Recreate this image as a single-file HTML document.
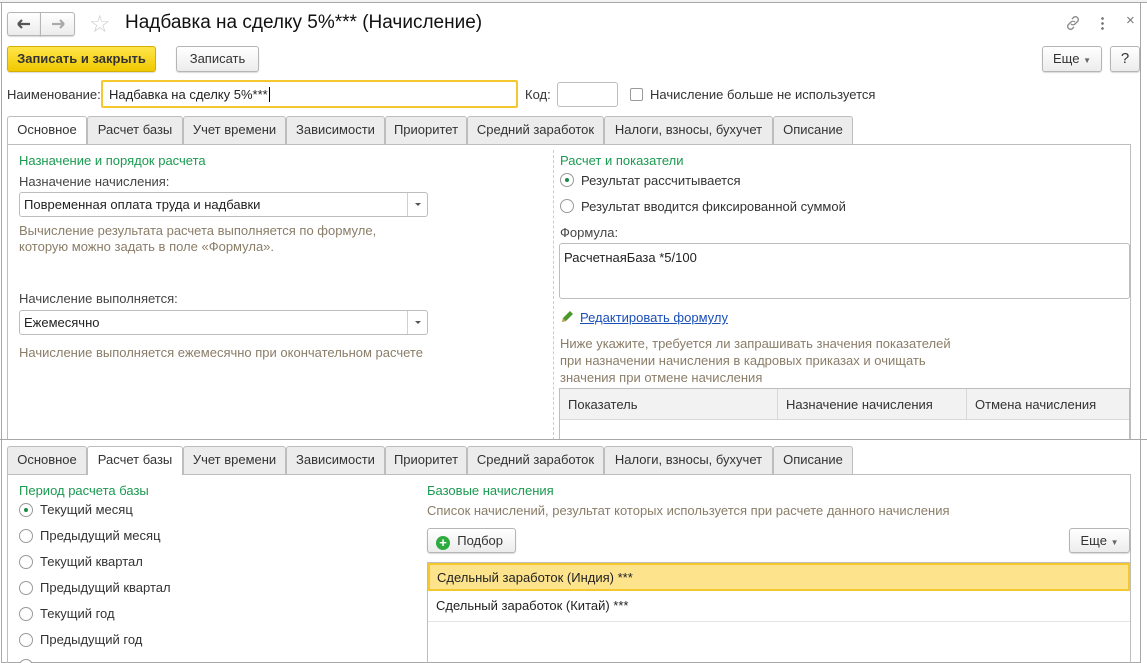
<!DOCTYPE html><html><head><meta charset="utf-8"><style>
*{box-sizing:border-box}
html,body{margin:0;width:1147px;height:663px;overflow:hidden}
body{background:#fff;font-family:"Liberation Sans",Arial,sans-serif;font-size:13px;color:#333;position:relative}
.a{position:absolute;white-space:nowrap}
.btn{position:absolute;border:1px solid #b5b5b5;border-radius:3px;background:linear-gradient(#fff,#ececec);box-shadow:0 1px 1px rgba(0,0,0,.15);text-align:center;color:#333}
.tab{position:absolute;height:28px;border:1px solid #bdbdbd;border-bottom:none;background:#ececec;border-radius:3px 3px 0 0;text-align:center;line-height:26px;color:#333}
.tab.on{background:#fff;height:29px}
.grn{color:#1a9a50}
.hint{color:#8a7d68}
.inp{position:absolute;border:1px solid #bdbdbd;border-radius:3px;background:#fff}
.rad{position:absolute;width:14px;height:14px;border:1px solid #9a9a9a;border-radius:50%;background:#fff}
.rad.on::after{content:"";position:absolute;left:4px;top:4px;width:4px;height:4px;border-radius:50%;background:#1a8a4a}
.dd{position:absolute;right:0;top:0;bottom:0;width:20px;border-left:1px solid #d0d0d0}
.dd::after{content:"";position:absolute;left:7px;top:10px;border:3px solid transparent;border-top:3px solid #555}
</style></head><body>
<div class="a" style="left:0;top:0;width:1147px;height:663px;overflow:hidden">
<div class="a" style="left:0;top:0;width:1147px;height:3px;background:#f2f2f2;border-bottom:1px solid #a8a8a8"></div>
<div class="a" style="left:1px;top:3px;width:1140px;height:437px;border-left:1px solid #a8a8a8;border-right:1px solid #a8a8a8"></div>
<div class="btn" style="left:7px;top:12px;width:34px;height:24px;border-radius:3px 0 0 3px"><svg width="16" height="12" style="margin-top:5px" viewBox="0 0 16 12"><path d="M2 6h12M2 6l4-4M2 6l4 4" stroke="#555" stroke-width="2.2" fill="none"/></svg></div>
<div class="btn" style="left:40px;top:12px;width:35px;height:24px;border-radius:0 3px 3px 0"><svg width="16" height="12" style="margin-top:5px" viewBox="0 0 16 12"><path d="M2 6h12M14 6l-4-4M14 6l-4 4" stroke="#aaa" stroke-width="2.2" fill="none"/></svg></div>
<div class="a" style="left:89px;top:10px;font-size:24px;color:#ccc">☆</div>
<div class="a" style="left:125px;top:12px;font-size:19px;color:#111">Надбавка на сделку 5%*** (Начисление)</div>
<svg class="a" style="left:1064px;top:14px" width="18" height="18" viewBox="0 0 18 18" fill="none" stroke="#888" stroke-width="1.3"><path d="M8 5l2-2a3 3 0 0 1 4 4l-3 3a3 3 0 0 1-4 0M10 13l-2 2a3 3 0 0 1-4-4l3-3a3 3 0 0 1 4 0"/></svg>
<div class="a" style="left:1101px;top:16px;width:3px;height:14px;background:radial-gradient(circle,#777 1.2px,transparent 1.5px) 0 0/3px 5px"></div>
<div class="a" style="left:1126px;top:12px;font-size:15px;color:#777">×</div>
<div class="btn" style="left:7px;top:46px;width:149px;height:26px;line-height:24px;background:linear-gradient(#ffe54a,#f1c800);border-color:#d4ae00;color:#333;font-weight:bold">Записать и закрыть</div>
<div class="btn" style="left:176px;top:46px;width:83px;height:26px;line-height:24px">Записать</div>
<div class="btn" style="left:1042px;top:46px;width:60px;height:26px;line-height:24px">Еще <span style="font-size:8px;color:#666">▼</span></div>
<div class="btn" style="left:1110px;top:46px;width:30px;height:26px;line-height:24px;font-size:15px">?</div>
<div class="a" style="left:7px;top:87px">Наименование:</div>
<div class="a" style="left:101px;top:80px;width:417px;height:28px;border:2px solid #f6c830;border-radius:2px;padding:5px 6px;color:#222">Надбавка на сделку 5%***<span style="border-left:1px solid #000;margin-left:1px"></span></div>
<div class="a" style="left:525px;top:87px">Код:</div>
<div class="inp" style="left:557px;top:82px;width:61px;height:25px"></div>
<div class="a" style="left:630px;top:88px;width:13px;height:13px;border:1px solid #9a9a9a;border-radius:2px"></div>
<div class="a" style="left:650px;top:87px">Начисление больше не используется</div>
<div class="tab on" style="left:7px;top:116px;width:80px">Основное</div>
<div class="tab" style="left:87px;top:116px;width:96px">Расчет базы</div>
<div class="tab" style="left:183px;top:116px;width:103px">Учет времени</div>
<div class="tab" style="left:286px;top:116px;width:99px">Зависимости</div>
<div class="tab" style="left:385px;top:116px;width:82px">Приоритет</div>
<div class="tab" style="left:467px;top:116px;width:137px">Средний заработок</div>
<div class="tab" style="left:604px;top:116px;width:169px">Налоги, взносы, бухучет</div>
<div class="tab" style="left:773px;top:116px;width:80px">Описание</div>
<div class="a" style="left:7px;top:144px;width:1124px;height:300px;border:1px solid #bdbdbd;border-bottom:none"></div>
<div class="a" style="left:87px;top:144px;width:1044px;height:1px;background:#bdbdbd"></div>
<div class="a grn" style="left:19px;top:153px">Назначение и порядок расчета</div>
<div class="a" style="left:19px;top:174px;color:#444">Назначение начисления:</div>
<div class="inp" style="left:19px;top:192px;width:409px;height:25px;padding:4px 4px;color:#222">Повременная оплата труда и надбавки<div class="dd"></div></div>
<div class="a hint" style="left:19px;top:223px;line-height:16px">Вычисление результата расчета выполняется по формуле,<br>которую можно задать в поле «Формула».</div>
<div class="a" style="left:19px;top:291px;color:#444">Начисление выполняется:</div>
<div class="inp" style="left:19px;top:310px;width:409px;height:25px;padding:4px 4px;color:#222">Ежемесячно<div class="dd"></div></div>
<div class="a hint" style="left:19px;top:345px">Начисление выполняется ежемесячно при окончательном расчете</div>
<div class="a" style="left:553px;top:150px;height:290px;border-left:1px dashed #ccc"></div>
<div class="a grn" style="left:560px;top:153px">Расчет и показатели</div>
<div class="rad on" style="left:560px;top:173px"></div><div class="a" style="left:581px;top:173px">Результат рассчитывается</div>
<div class="rad" style="left:560px;top:199px"></div><div class="a" style="left:581px;top:199px">Результат вводится фиксированной суммой</div>
<div class="a" style="left:560px;top:225px;color:#444">Формула:</div>
<div class="inp" style="left:559px;top:243px;width:571px;height:56px;padding:6px 4px;color:#222">РасчетнаяБаза *5/100</div>
<svg class="a" style="left:560px;top:310px" width="14" height="14" viewBox="0 0 14 14"><path d="M2 12l1-4 7-7 3 3-7 7z" fill="#4a9a2a"/><path d="M2 12l1-4 3 3z" fill="#c79a50"/></svg>
<div class="a" style="left:580px;top:310px;color:#1a4fb8;text-decoration:underline">Редактировать формулу</div>
<div class="a hint" style="left:560px;top:335px;line-height:17px">Ниже укажите, требуется ли запрашивать значения показателей<br>при назначении начисления в кадровых приказах и очищать<br>значения при отмене начисления</div>
<div class="a" style="left:559px;top:388px;width:571px;height:55px;border:1px solid #bdbdbd"></div>
<div class="a" style="left:560px;top:389px;width:569px;height:31px;background:#f2f2f2;border-bottom:1px solid #d8d8d8"></div>
<div class="a" style="left:568px;top:397px">Показатель</div>
<div class="a" style="left:777px;top:389px;height:31px;border-left:1px solid #d8d8d8"></div>
<div class="a" style="left:786px;top:397px">Назначение начисления</div>
<div class="a" style="left:966px;top:389px;height:31px;border-left:1px solid #d8d8d8"></div>
<div class="a" style="left:975px;top:397px">Отмена начисления</div>
<div class="a" style="left:0;top:439px;width:1147px;height:224px;background:#fff;border-top:1px solid #a8a8a8"></div>
<div class="a" style="left:1px;top:440px;width:1140px;height:223px;border-left:1px solid #a8a8a8;border-right:1px solid #a8a8a8;border-bottom:1px solid #a8a8a8"></div>
<div class="tab" style="left:7px;top:446px;width:80px">Основное</div>
<div class="tab on" style="left:87px;top:446px;width:96px">Расчет базы</div>
<div class="tab" style="left:183px;top:446px;width:103px">Учет времени</div>
<div class="tab" style="left:286px;top:446px;width:99px">Зависимости</div>
<div class="tab" style="left:385px;top:446px;width:82px">Приоритет</div>
<div class="tab" style="left:467px;top:446px;width:137px">Средний заработок</div>
<div class="tab" style="left:604px;top:446px;width:169px">Налоги, взносы, бухучет</div>
<div class="tab" style="left:773px;top:446px;width:80px">Описание</div>
<div class="a" style="left:7px;top:474px;width:1124px;height:190px;border:1px solid #bdbdbd;border-top:none"></div>
<div class="a" style="left:7px;top:474px;width:80px;height:1px;background:#bdbdbd"></div>
<div class="a" style="left:183px;top:474px;width:948px;height:1px;background:#bdbdbd"></div>
<div class="a grn" style="left:19px;top:483px">Период расчета базы</div>
<div class="rad on" style="left:19px;top:503px"></div><div class="a" style="left:40px;top:502px">Текущий месяц</div>
<div class="rad" style="left:19px;top:529px"></div><div class="a" style="left:40px;top:528px">Предыдущий месяц</div>
<div class="rad" style="left:19px;top:555px"></div><div class="a" style="left:40px;top:554px">Текущий квартал</div>
<div class="rad" style="left:19px;top:581px"></div><div class="a" style="left:40px;top:580px">Предыдущий квартал</div>
<div class="rad" style="left:19px;top:607px"></div><div class="a" style="left:40px;top:606px">Текущий год</div>
<div class="rad" style="left:19px;top:633px"></div><div class="a" style="left:40px;top:632px">Предыдущий год</div>
<div class="rad" style="left:19px;top:659px"></div>
<div class="a grn" style="left:427px;top:483px">Базовые начисления</div>
<div class="a hint" style="left:427px;top:503px">Список начислений, результат которых используется при расчете данного начисления</div>
<div class="btn" style="left:427px;top:528px;width:89px;height:25px;line-height:23px;text-align:left;padding-left:8px"><span style="display:inline-block;width:14px;height:14px;border-radius:50%;background:#2eaa3e;color:#fff;font-size:13px;line-height:14px;text-align:center;font-weight:bold;vertical-align:-2px">+</span> &nbsp;Подбор</div>
<div class="btn" style="left:1069px;top:528px;width:61px;height:25px;line-height:23px">Еще <span style="font-size:8px;color:#666">▼</span></div>
<div class="a" style="left:427px;top:562px;width:704px;height:102px;border:1px solid #bdbdbd"></div>
<div class="a" style="left:428px;top:563px;width:702px;height:28px;background:#fde48c;border:2px solid #f6c830;padding:5px 7px;color:#222">Сдельный заработок (Индия) ***</div>
<div class="a" style="left:428px;top:592px;width:702px;height:30px;border-bottom:1px solid #e4e4e4;padding:6px 8px;color:#222">Сдельный заработок (Китай) ***</div>
</div>
</body></html>
